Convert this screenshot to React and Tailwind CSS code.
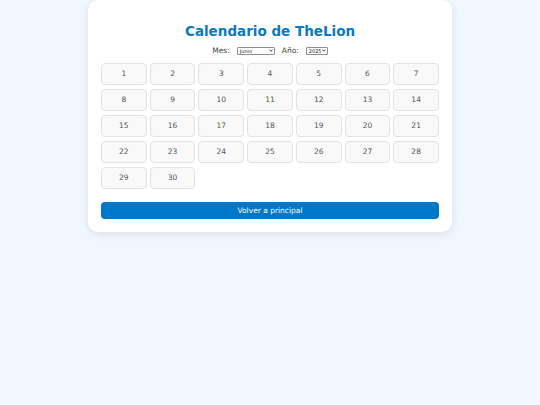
import React, { useState } from 'react';

const meses = ['Enero', 'Febrero', 'Marzo', 'Abril', 'Mayo', 'Junio', 'Julio', 'Agosto', 'Septiembre', 'Octubre', 'Noviembre', 'Diciembre'];

function MiniSelect({ value, onChange, options, width }) {
  return (
    <span className={`relative ml-[7px] inline-flex ${width}`}>
      <select
        value={value}
        onChange={onChange}
        className="appearance-none w-full h-[8px] text-[5px] leading-[6px] pl-[2px] pr-[6px] py-0 border border-[#8f8f8f] rounded-[1px] bg-white text-[#222] outline-none"
      >
        {options.map((o) => <option key={o.v} value={o.v}>{o.l}</option>)}
      </select>
      <svg className="absolute right-[1.5px] top-[2px] w-[4px] h-[3px] pointer-events-none" viewBox="0 0 8 6">
        <path d="M1 1.2 L4 4.5 L7 1.2" fill="none" stroke="#222" strokeWidth="1.6" />
      </svg>
    </span>
  );
}

export default function App() {
  const [mes, setMes] = useState(5);
  const [anio, setAnio] = useState(2025);
  const dias = new Date(anio, mes + 1, 0).getDate();

  return (
    <div className="min-h-[405px] bg-[#f0f7ff] font-['DejaVu_Sans',sans-serif]">
      <div className="mx-auto w-[364px] bg-white rounded-[10px] shadow-[0_2px_8px_rgba(0,0,0,0.1)] px-[13px] pt-[21px] pb-[13px]">
        <h1 className="text-center text-[13.5px] leading-[20px] font-bold text-[#0a78c4]">Calendario de TheLion</h1>
        <div className="mt-[4px] flex justify-center items-center text-[7.5px] text-[#444] h-[12px]">
          <span>Mes:</span>
          <MiniSelect value={mes} onChange={(e) => setMes(+e.target.value)} width="w-[38px]" options={meses.map((m, i) => ({ v: i, l: m }))} />
          <span className="ml-[7px]">Año:</span>
          <MiniSelect value={anio} onChange={(e) => setAnio(+e.target.value)} width="w-[22px]" options={[2024, 2025, 2026].map((a) => ({ v: a, l: a }))} />
        </div>
        <div className="mt-[6px] grid grid-cols-7 gap-x-[3px] gap-y-[4px]">
          {Array.from({ length: dias }, (_, i) => (
            <div key={i} className="h-[22px] flex items-center justify-center bg-[#f9f9f9] border border-[#e2e2e2] rounded-[4px] text-[7.5px] text-[#555]">
              {i + 1}
            </div>
          ))}
        </div>
        <button className="mt-[13px] w-full h-[17px] bg-[#0077c8] rounded-[4px] text-white text-[7.5px] flex items-center justify-center">
          Volver a principal
        </button>
      </div>
    </div>
  );
}
